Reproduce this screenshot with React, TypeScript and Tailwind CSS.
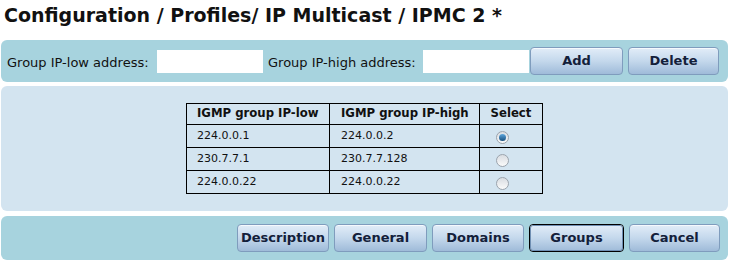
import React from 'react';

const rows = [
  { low: '224.0.0.1', high: '224.0.0.2', selected: true },
  { low: '230.7.7.1', high: '230.7.7.128', selected: false },
  { low: '224.0.0.22', high: '224.0.0.22', selected: false },
];

const Btn = ({ label, w, active }: { label: string; w: string; active?: boolean }) => (
  <button
    className={`${w} h-[28px] rounded-[4px] border ${active ? 'border-black outline outline-1 outline-[#6f8fb3] -outline-offset-2' : 'border-[#7f9cbd]'} bg-gradient-to-b from-[#e2edf8] via-[#c4d8ec] to-[#9fbbd9] text-[13px] font-bold text-[#13203a] flex items-center justify-center shadow-[inset_0_1px_0_#f5f9fd]`}
  >
    {label}
  </button>
);

const Radio = ({ on }: { on: boolean }) => (
  <span className="w-[13px] h-[13px] rounded-full border border-[#9aa3ad] bg-gradient-to-b from-[#d9dde2] to-[#fafafa] flex items-center justify-center">
    {on && <span className="w-[7px] h-[7px] rounded-full bg-gradient-to-b from-[#5fa7dd] to-[#17507f]" />}
  </span>
);

export default function App() {
  return (
    <div className="w-[732px] h-[267px] bg-white font-['DejaVu_Sans',Verdana,sans-serif] text-[#111]">
      <h1 className="pl-[4px] pt-[3px] h-[40px] text-[19px] font-bold leading-[24px] text-[#111]">
        Configuration / Profiles/ IP Multicast / IPMC 2 *
      </h1>
      <div className="ml-[1px] w-[727px] h-[42px] rounded-[6px] bg-[#a7d3de] flex items-center pl-[6px] text-[13px]">
        <span className="w-[150px] pt-[4px]">Group IP-low address:</span>
        <input className="w-[106px] h-[23px] bg-white outline-none" />
        <span className="ml-[5px] w-[155px] pt-[4px]">Group IP-high address:</span>
        <input className="w-[106px] h-[23px] bg-white outline-none" />
        <div className="ml-[1px] flex gap-[5px]">
          <Btn label="Add" w="w-[93px]" />
          <Btn label="Delete" w="w-[91px]" />
        </div>
      </div>
      <div className="ml-[1px] mt-[4px] w-[727px] h-[125px] rounded-[6px] bg-[#d3e4f0] pt-[17px] pl-[185px]">
        <table className="border-collapse text-[11px]">
          <thead>
            <tr className="h-[21px] text-[11.7px]">
              <th className="border border-black w-[143px] text-left pl-[10px] font-bold">IGMP group IP-low</th>
              <th className="border border-black w-[150px] text-left pl-[11px] font-bold">IGMP group IP-high</th>
              <th className="border border-black w-[63px] text-center font-bold">Select</th>
            </tr>
          </thead>
          <tbody>
            {rows.map((r) => (
              <tr key={r.low + r.high} className="h-[23px]">
                <td className="border border-black pl-[10px]">{r.low}</td>
                <td className="border border-black pl-[11px]">{r.high}</td>
                <td className="border border-black">
                  <div className="flex pl-[16px] pt-[2px]">
                    <Radio on={r.selected} />
                  </div>
                </td>
              </tr>
            ))}
          </tbody>
        </table>
      </div>
      <div className="ml-[1px] mt-[5px] w-[727px] h-[44px] rounded-[6px] bg-[#a7d3de] flex items-center justify-end pr-[8px] gap-[5px]">
        <Btn label="Description" w="w-[92px]" />
        <Btn label="General" w="w-[93px]" />
        <Btn label="Domains" w="w-[92px]" />
        <Btn label="Groups" w="w-[95px]" active />
        <Btn label="Cancel" w="w-[91px]" />
      </div>
    </div>
  );
}
